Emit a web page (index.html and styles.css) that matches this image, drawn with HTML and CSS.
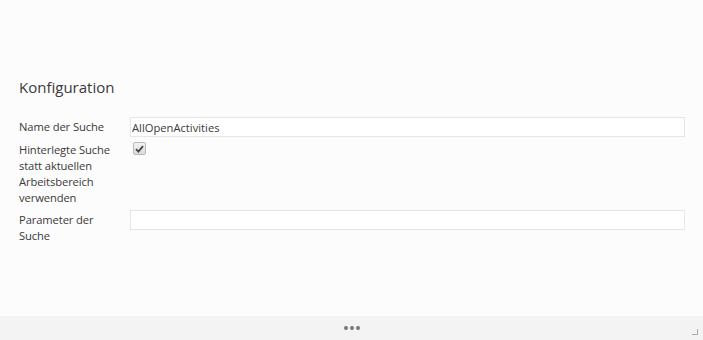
FILE: index.html
```html
<!DOCTYPE html>
<html>
<head>
<meta charset="utf-8">
<link rel="stylesheet" href="styles.css">
</head>
<body>
<div class="page">
  <main class="content">
    <h2 class="title">Konfiguration</h2>
    <div class="form">
      <div class="row">
        <label class="label">Name der Suche</label>
        <div class="field"><input class="input" type="text" value="AllOpenActivities"></div>
      </div>
      <div class="row">
        <label class="label">Hinterlegte Suche statt aktuellen Arbeitsbereich verwenden</label>
        <div class="field"><span class="check"><svg width="9" height="8" viewBox="0 0 9 8"><path d="M1 4.2 L3.4 6.6 L8 1.2" fill="none" stroke="#444" stroke-width="1.8"/></svg></span></div>
      </div>
      <div class="row">
        <label class="label">Parameter der Suche</label>
        <div class="field"><input class="input" type="text" value=""></div>
      </div>
    </div>
  </main>
  <footer class="footer">
    <span class="dots"><i></i><i></i><i></i></span>
    <span class="grip"></span>
  </footer>
</div>
</body>
</html>
```

FILE: styles.css
```css
html, body {
  margin: 0;
  padding: 0;
  height: 100%;
}
body {
  background: #fcfcfc;
  font-family: "Open Sans", "Noto Sans", sans-serif;
  color: #333;
}
.page {
  display: flex;
  flex-direction: column;
  height: 340px;
}
.content {
  flex: 1;
  padding: 76px 18px 0 19px;
}
.title {
  margin: 0 0 19px 0;
  font-size: 15px;
  font-weight: 400;
  line-height: 22px;
  color: #3a3a3a;
}
.form {
  display: flex;
  flex-direction: column;
  gap: 4px;
}
.row {
  display: grid;
  grid-template-columns: 111px 1fr;
  align-items: start;
}
.label {
  font-size: 11.2px;
  line-height: 16px;
  padding-top: 2px;
  padding-right: 12px;
  color: #3a3a3a;
  letter-spacing: -0.1px;
}
.row:nth-child(2) .label {
  padding-top: 1px;
}
.field {
  display: flex;
}
.input {
  box-sizing: border-box;
  width: 100%;
  height: 20px;
  border: 1px solid #e6e6e6;
  background: #fff;
  font-family: "Open Sans", "Noto Sans", sans-serif;
  font-size: 11.2px;
  letter-spacing: 0;
  color: #3a3a3a;
  padding: 0 1px;
  outline: none;
}
.check {
  margin: 1px 0 0 3px;
  box-sizing: border-box;
  width: 13px;
  height: 13px;
  border: 1px solid #b9b9b9;
  border-radius: 2px;
  background: linear-gradient(#f2f2f2, #dcdcdc);
  display: flex;
  align-items: center;
  justify-content: center;
}
.footer {
  height: 24px;
  background: #f3f3f3;
  display: flex;
  align-items: center;
  justify-content: center;
  position: relative;
}
.dots {
  display: flex;
  gap: 2px;
  margin-left: 1px;
}
.dots i {
  width: 4px;
  height: 4px;
  border-radius: 50%;
  background: #777;
}
.grip {
  position: absolute;
  right: 5px;
  bottom: 5px;
  width: 5px;
  height: 5px;
  border-right: 1px solid #aaa;
  border-bottom: 1px solid #aaa;
}
```
